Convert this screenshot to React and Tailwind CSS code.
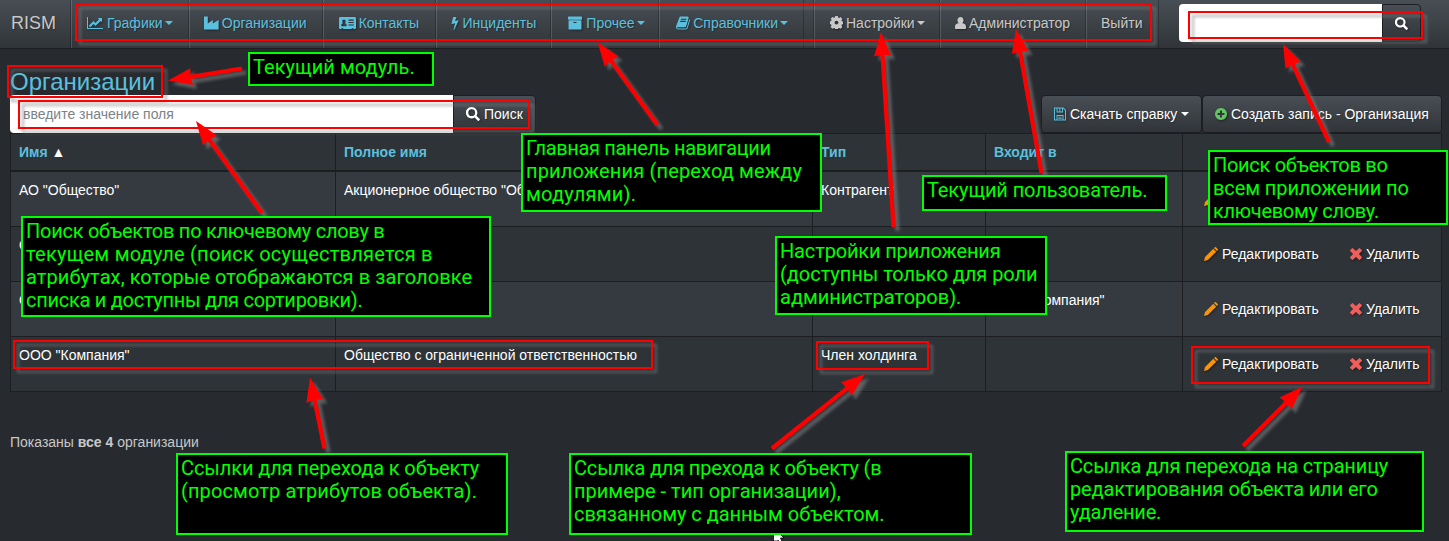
import React from "react";

const PATHS = {
  chart: ["0 0 2048 1792", "M2048 1536v128h-2048v-1536h128v1408h1920zm-128-1248v435q0 21-19.5 29.5t-35.5-7.5l-121-121-633 633q-10 10-23 10t-23-10l-233-233-416 416-192-192 585-585q10-10 23-10t23 10l233 233 464-464-121-121q-16-16-7.5-35.5t29.5-19.5h435q14 0 23 9t9 23z"],
  industry: ["1 0 15 14", "M1 0.5h3.8v7l5-3.6v3.6l5.800-3.600V13.500H1z"],
  card: ["0 0 17 14", "M1.3 1h14.4q1.3 0 1.3 1.3v9.4q0 1.3-1.3 1.3h-1.2v-.8h-1.8v.8H4.3v-.8H2.500v.8H1.300Q0 13 0 11.700V2.300Q0 1 1.300 1zM5 3.500c-1 0-1.700.8-1.700 1.900 0 .8.3 1.400.8 1.800-1.300.1-1.800 1-1.800 2.300 0 .5.3.8.8.8h3.800c.5 0 .8-.3.8-.8 0-1.300-.5-2.200-1.800-2.300.5-.4.8-1 .8-1.800 0-1.100-.7-1.900-1.700-1.900zM9.500 3.600v1.100h5.300V3.600zM9.500 6v1.100h5.300V6zM9.500 8.400v1.100h5.300V8.400z"],
  bolt: ["448 0 896 1792", "M1333 566q18 20 7 44l-540 1157q-13 25-42 25-4 0-14-2-17-5-25.5-19t-4.500-30l197-808-406 101q-4 1-12 1-18 0-31-11-18-15-13-39l201-825q4-16 17.500-26t30.500-10h328q19 0 32 12.500t13 29.500q0 8-5 18l-171 463 396-98q8-2 12-2 19 0 34 15z"],
  archive: ["64 64 1664 1664", "M1088 832q0-26-19-45t-45-19h-256q-26 0-45 19t-19 45 19 45 45 19h256q26 0 45-19t19-45zm576-192v960q0 26-19 45t-45 19h-1408q-26 0-45-19t-19-45v-960q0-26 19-45t45-19h1408q26 0 45 19t19 45zm64-448v256q0 26-19 45t-45 19h-1536q-26 0-45-19t-19-45v-256q0-26 19-45t45-19h1536q26 0 45 19t19 45z"],
  book: ["64 64 1664 1664", "M1703 478q40 57 18 129l-275 906q-19 64-76.5 107.5t-122.5 43.5h-923q-77 0-148.5-53.5t-99.5-131.5q-24-67-2-127 0-4 3-27t4-37q1-8-3-21.5t-3-19.5q2-11 8-21t16.5-23.5 16.5-23.5q23-38 45-91.5t30-91.5q3-10 .5-30t-.5-28q3-11 17-28t17-23q21-36 42-92t25-90q1-9-2.5-32t.5-28q4-13 22-30.5t22-22.5q19-26 42.5-84.5t27.5-96.5q1-8-3-25.5t-2-26.5q2-8 9-18t18-23 17-21q8-12 16.5-30.5t15-35 16-36 19.5-32 26.5-23.5 36-11.5 47.5 5.5l-1 3q38-9 51-9h761q74 0 114 56t18 130l-274 906q-36 119-71.5 153.5t-128.5 34.5h-869q-27 0-38 15-11 16-1 43 24 70 144 70h923q29 0 56-15.5t35-41.5l300-987q7-22 5-57 38 15 59 43zm-1064 2q-4 13 2 22.5t20 9.5h608q13 0 25.5-9.5t16.5-22.5l21-64q4-13-2-22.5t-20-9.5h-608q-13 0-25.5 9.5t-16.5 22.5zm-83 256q-4 13 2 22.5t20 9.5h608q13 0 25.5-9.5t16.5-22.5l21-64q4-13-2-22.5t-20-9.5h-608q-13 0-25.5 9.500t-16.500 22.500z"],
  cog: ["0 1 14 14", "M5.600 1h2.800l.4 1.700 1 .4 1.600-.9 1.900 1.900-.9 1.500.4 1 1.700.4v2.800l-1.700.4-.4 1 .9 1.600-1.900 1.900-1.600-.9-1 .4-.4 1.700H5.600l-.4-1.700-1-.4-1.600.9-1.900-1.900.9-1.600-.4-1L0 9.500V6.700l1.300-.4.4-1L.8 3.900l1.800-1.800 1.600.9 1-.4zM7 6a2.100 2.100 0 1 0 0 4.200A2.100 2.100 0 0 0 7 6z"],
  user: ["0 0 12 14", "M6 0.500c2 0 3.300 1.400 3.300 3.500 0 1.300-.5 2.500-1.300 3.200 2.500.3 4 1.300 4 3.800v1.700q0 .8-.8.800H.800q-.8 0-.8-.8V11c0-2.500 1.500-3.500 4-3.800C3.200 6.500 2.700 5.300 2.700 4 2.700 1.900 4 .5 6 .5z"],
  search: ["0 0 14 14", "M5.700 0a5.700 5.700 0 0 1 4.800 8.700l3.200 3.200q.5.500 0 1l-.9.900q-.5.500-1 0L8.600 10.500A5.700 5.700 0 1 1 5.700 0zm0 2.300a3.400 3.400 0 1 0 0 6.800 3.400 3.400 0 0 0 0-6.800z"],
  floppy: ["0 0 12 14", "M0 0.500h9.500L12 3v10.500H0zM1 1.500v11h1.500V8h7v4.500H11V3.500L9 1.500v4H2.500v-4zM3.500 1.500v3h1.800v-3zM6.300 1.500v3H8v-3zM3.500 9v3.500h5V9zM4.300 9.800h3.400v.7H4.300zM4.300 11.200h3.400v.7H4.300z"],
  plus: ["128 128 1536 1536", "M1344 960v-128q0-26-19-45t-45-19h-256v-256q0-26-19-45t-45-19h-128q-26 0-45 19t-19 45v256h-256q-26 0-45 19t-19 45v128q0 26 19 45t45 19h256v256q0 26 19 45t45 19h128q26 0 45-19t19-45v-256h256q26 0 45-19t19-45zm320-64q0 209-103 385.5t-279.5 279.5-385.5 103-385.5-103-279.5-279.5-103-385.5 103-385.5 279.5-279.5 385.5-103 385.5 103 279.5 279.5 103 385.5z"],
  pencil: ["0 0 14 14", "M0 14l1-3.900L9.300 1.800l2.900 2.900L3.900 13zM10 1.100l.8-.8q.6-.6 1.200 0L13.700 2q.6.600 0 1.200l-.8.8z"],
  cross: ["0 0 12 12", "M2.900.2 6 3.100 9.100.2q.4-.4.800 0l1.900 1.900q.4.400 0 .8L8.900 6l2.900 3.100q.4.400 0 .8l-1.900 1.900q-.4.400-.8 0L6 8.900l-3.100 2.900q-.4.400-.8 0L.2 9.900q-.4-.4 0-.8L3.100 6 .2 2.900q-.4-.4 0-.8L2.100.2q.4-.4.800 0z"],
};

function Icon({ name, className }) {
  const [box, d] = PATHS[name];
  return (
    <svg viewBox={box} className={"shrink-0 drop-shadow-[1px_1px_1px_rgba(0,0,0,0.4)] " + className} fill="currentColor" fillRule="evenodd">
      <path d={d} />
    </svg>
  );
}

function Caret() {
  return <span className="ml-0.5 h-0 w-0 border-x-4 border-t-4 border-x-transparent border-t-current" />;
}

const NAV = [
  { icon: "chart", size: "w-4 h-3.5 mr-1", text: "Графики", caret: true, width: "w-[118px] pl-[15px]" },
  { icon: "industry", size: "w-[15px] h-3.5 mr-[3px]", text: "Организации", width: "w-[134px] pl-[14px]" },
  { icon: "card", size: "w-[17px] h-3.5 mr-[3px]", text: "Контакты", width: "w-[113px] pl-[15px]" },
  { icon: "bolt", size: "w-2 h-3.5 mr-1", text: "Инциденты", width: "w-[116px] pl-[14px]" },
  { icon: "archive", size: "w-3.5 h-3.5 mr-1", text: "Прочее", caret: true, width: "w-[108px] pl-[16px]" },
  { icon: "book", size: "w-3.5 h-3.5 mr-[3px]", text: "Справочники", caret: true, width: "w-[144px] pl-[16px]" },
];

function NavItem({ item, className }) {
  return (
    <a className={"flex h-12 items-center border-l border-white/15 pb-[3px] shadow-[-1px_0_0_rgba(0,0,0,0.25)] " + item.width + " " + className}>
      {item.icon && <Icon name={item.icon} className={item.size} />}
      <span>{item.text}</span>
      {item.caret && <Caret />}
    </a>
  );
}

const ROWS = [
  ['АО "Общество"', 'Акционерное общество "Общество"', "Контрагент", ""],
  ["ООО", "", "", ""],
  ["ООО", "", "", 'ООО "Компания"'],
  ['ООО "Компания"', "Общество с ограниченной ответственностью", "Член холдинга", ""],
];

const NOTES = [
  { box: "left-[248px] top-[52px] w-[186px] h-[34px]", lines: [["Текущий модуль.", "tracking-[0.06px]"]] },
  {
    box: "left-[21px] top-[216px] w-[470px] h-[101px]",
    lines: [
      ["Поиск объектов по ключевому слову в", "tracking-[-0.26px]"],
      ["текущем модуле (поиск осуществляется в", "tracking-[0.23px]"],
      ["атрибутах, которые отображаются в заголовке", "tracking-[0.08px]"],
      ["списка и доступны для сортировки).", "tracking-[-0.27px]"],
    ],
  },
  {
    box: "left-[521px] top-[133px] w-[301px] h-[79px]",
    lines: [
      ["Главная панель навигации", "tracking-[-0.33px]"],
      ["приложения (переход между", "tracking-[0.15px]"],
      ["модулями).", "tracking-[0.25px]"],
    ],
  },
  { box: "left-[922px] top-[175px] w-[245px] h-[36px]", lines: [["Текущий пользователь.", "tracking-[-0.1px]"]] },
  {
    box: "left-[775px] top-[236px] w-[272px] h-[79px]",
    lines: [
      ["Настройки приложения", "tracking-[-0.15px]"],
      ["(доступны только для роли", "tracking-[-0.04px]"],
      ["администраторов).", "tracking-[0px]"],
    ],
  },
  {
    box: "left-[1208px] top-[150px] w-[240px] h-[75px]",
    lines: [
      ["Поиск объектов во", "tracking-[-0.3px]"],
      ["всем приложении по", "tracking-[-0.1px]"],
      ["ключевому слову.", "tracking-[-0.3px]"],
    ],
  },
  {
    box: "left-[176px] top-[453px] w-[332px] h-[82px]",
    lines: [
      ["Ссылки для перехода к объекту", "tracking-[-0.1px]"],
      ["(просмотр атрибутов объекта).", "tracking-[0.11px]"],
    ],
  },
  {
    box: "left-[569px] top-[453px] w-[403px] h-[82px]",
    lines: [
      ["Ссылка для прехода к объекту (в", "tracking-[-0.18px]"],
      ["примере - тип организации),", "tracking-[0px]"],
      ["связанному с данным объектом.", "tracking-[-0.03px]"],
    ],
  },
  {
    box: "left-[1065px] top-[451px] w-[359px] h-[81px]",
    lines: [
      ["Ссылка для перехода на страницу", "tracking-[-0.16px]"],
      ["редактирования объекта или его", "tracking-[-0.15px]"],
      ["удаление.", "tracking-[-0.2px]"],
    ],
  },
];

// x, y, right, bottom
const FRAMES = [
  [75, 3, 1152, 41],
  [7, 65, 163, 98],
  [18, 100, 530, 129],
  [1188, 11, 1423, 39],
  [13, 340, 653, 369],
  [816, 341, 929, 370],
  [1191, 346, 1430, 384],
];

// tip x, tip y, tail x, tail y
const ARROWS = [
  [168, 80.500, 242, 68.500],
  [196, 121, 262, 213],
  [597.500, 42, 657.500, 125],
  [881, 32, 893.500, 227],
  [1016, 29, 1041.500, 173],
  [1283, 43.500, 1329, 142],
  [310, 377.500, 324.500, 448.500],
  [865, 374, 772, 448.500],
  [1302.500, 386.500, 1243, 446],
];

function arrowPoints([tx, ty, sx, sy]) {
  const len = Math.hypot(sx - tx, sy - ty);
  const ux = (sx - tx) / len;
  const uy = (sy - ty) / len;
  const at = (along, side) => `${tx + ux * along - uy * side},${ty + uy * along + ux * side}`;
  return [at(0, 0), at(24, 8.5), at(23, 2.1), at(len, 2.1), at(len, -2.1), at(23, -2.1), at(24, -8.5)].join(" ");
}

const BUTTON = "flex h-[38px] items-center border border-[#1c1e22] bg-linear-to-b from-[#484e55] via-[#3a3f44] via-60% to-[#313539] text-white";

export default function App() {
  return (
    <div className="relative h-[541px] w-[1449px] overflow-hidden bg-[#272b30] font-['Liberation_Sans',sans-serif] text-sm leading-5 text-[#c8c8c8]">
      <nav className="flex h-[49px] border-b border-[#1c1e22] bg-linear-to-b from-[#484e55] via-[#3a3f44] via-60% to-[#313539] [text-shadow:1px_1px_1px_rgba(0,0,0,0.3)]">
        <div className="flex w-[71px] items-center pb-[3px] pl-[11px] text-lg">RISM</div>
        <div className="flex w-[733px] border-r border-black/25">
          {NAV.map((item) => <NavItem key={item.text} item={item} className="text-[#5bc0de]" />)}
        </div>
        <div className="ml-[10px] flex w-[345px] border-r border-black/25">
          <NavItem item={{ icon: "cog", size: "w-[13px] h-[13px] mr-[3px]", text: "Настройки", caret: true, width: "w-[126px] pl-[15px]" }} className="" />
          <NavItem item={{ icon: "user", size: "w-[11px] h-3.5 mr-[3px]", text: "Администратор", width: "w-[146px] pl-[14px]" }} className="" />
          <NavItem item={{ text: "Выйти", width: "w-[72px] pl-[14px]" }} className="" />
        </div>
        <div className="ml-5 mt-1 flex">
          <div className="h-[38px] w-[203px] rounded-l bg-white" />
          <button className={BUTTON + " w-[39px] justify-center rounded-r"}>
            <Icon name="search" className="h-[13px] w-[13px]" />
          </button>
        </div>
      </nav>

      <main className="pl-[10px]">
        <h1 className="h-[46px] pt-[20px] text-2xl leading-[26px] text-[#5bc0de]">Организации</h1>
        <div className="flex h-[38px]">
          <div className="flex h-[38px] w-[443px] items-center rounded-l bg-white pl-[13px] text-[#7a8288]">введите значение поля</div>
          <button className={BUTTON + " w-[83px] rounded-r pl-3 [text-shadow:1px_1px_1px_rgba(0,0,0,0.3)]"}>
            <Icon name="search" className="mr-1 h-3.5 w-3.5" />
            Поиск
          </button>
          <button className={BUTTON + " ml-[505px] w-[161px] rounded pl-3 [text-shadow:1px_1px_1px_rgba(0,0,0,0.3)]"}>
            <Icon name="floppy" className="mr-1 h-3.5 w-3 text-[#5bc0de]" />
            Скачать справку
            <span className="ml-1"><span className="block h-0 w-0 border-x-4 border-t-4 border-x-transparent border-t-current" /></span>
          </button>
          <button className={BUTTON + " w-[240px] rounded pl-3 [text-shadow:1px_1px_1px_rgba(0,0,0,0.3)]"}>
            <Icon name="plus" className="mr-1 h-3 w-3 text-[#62c462]" />
            Создать запись - Организация
          </button>
        </div>

        <div className="w-[1432px] border-l border-t border-[#1c1e22]">
          <div className="grid h-[38px] grid-cols-[325px_477px_173px_197px_259px] border-b-2 border-[#1c1e22] bg-[#2e3338] font-bold text-[#5bc0de]">
            <div className="border-r border-[#1c1e22] px-2 pt-2">Имя <span className="text-white">▲</span></div>
            <div className="border-r border-[#1c1e22] px-2 pt-2">Полное имя</div>
            <div className="border-r border-[#1c1e22] px-2 pt-2">Тип</div>
            <div className="border-r border-[#1c1e22] px-2 pt-2">Входит в</div>
            <div className="border-r border-[#1c1e22]" />
          </div>
          {ROWS.map((row, i) => (
            <div key={i} className={"grid h-[55px] grid-cols-[325px_477px_173px_197px_259px] border-b border-[#1c1e22] text-white " + (i % 2 ? "bg-[#2e3338]" : "bg-[#353a41]")}>
              {row.map((cell, j) => (
                <div key={j} className="whitespace-nowrap border-r border-[#1c1e22] px-2 pt-2">{cell}</div>
              ))}
              <div className="flex items-center border-r border-[#1c1e22] pl-[21px] [text-shadow:1px_1px_1px_rgba(0,0,0,0.3)]">
                <Icon name="pencil" className="mr-1 h-3.5 w-3.5 text-[#f89406]" />
                <span className="w-[128px]">Редактировать</span>
                <Icon name="cross" className="mr-1 h-3 w-3 text-[#ee5f5b]" />
                <span>Удалить</span>
              </div>
            </div>
          ))}
        </div>
        <p className="pt-10">Показаны <b>все 4</b> организации</p>
      </main>

      <svg className="pointer-events-none absolute inset-0 h-[541px] w-[1449px]" viewBox="0 0 1449 541">
        <g className="drop-shadow-[4px_4px_1.8px_rgba(128,128,128,0.6)]">
          {FRAMES.map(([x, y, r, b]) => (
            <rect key={x} x={x + 1} y={y + 1} width={r - x - 2} height={b - y - 2} fill="none" stroke="#ff0000" strokeWidth="2" />
          ))}
          {ARROWS.map((a) => <polygon key={a[0]} points={arrowPoints(a)} fill="#ff0000" />)}
        </g>
      </svg>

      {NOTES.map((note) => (
        <div key={note.box} className={"absolute whitespace-nowrap border-2 border-[#00ff00] bg-black pl-[3px] pt-0.5 font-['Roboto',sans-serif] text-[20px] leading-[23px] text-[#00ff00] " + note.box}>
          {note.lines.map(([line, tracking]) => <div key={line} className={tracking}>{line}</div>)}
        </div>
      ))}

      <svg className="absolute left-[773px] top-[535px] h-[6px] w-[12px]" viewBox="0 0 12 6">
        <path d="M0.500 -4V6H4L5.500 5.500 6.500 6.500H9L7.500 3H11L4 -4z" fill="#ffffff" stroke="#000000" strokeWidth="0.800" />
      </svg>
    </div>
  );
}
